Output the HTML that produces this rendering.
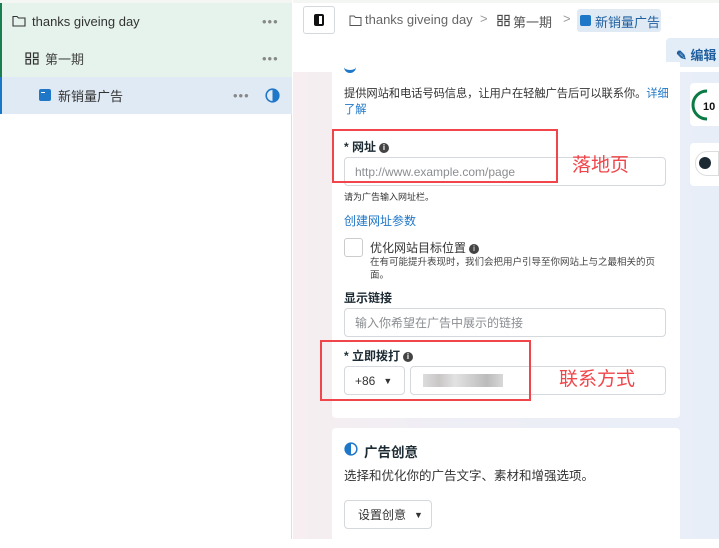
<!DOCTYPE html>
<html><head><meta charset="utf-8"><style>
*{box-sizing:border-box;margin:0;padding:0}
body{width:719px;height:539px;overflow:hidden;position:relative;font-family:"Liberation Sans","Noto Sans CJK SC",sans-serif;background:#fff;color:#1c2b33}
.abs{position:absolute}
.side{left:0;top:0;width:292px;height:539px;background:#fff;border-right:1px solid #dcdfe3}
.row{position:absolute;left:0;width:292px;height:37px;font-size:13px;display:flex;align-items:center}
.dots{position:absolute;color:#888;font-size:13px;letter-spacing:1px}
.main{left:293px;top:0;width:426px;height:539px;background:linear-gradient(90deg,#f6eef0 0%,#eeeef6 40%,#e8eef8 100%)}
.card{background:#fff;border-radius:4px}
.inp{position:absolute;border:1px solid #d5d8dc;border-radius:4px;background:#fff;font-size:12px;color:#8a8d91;display:flex;align-items:center;padding-left:10px}
.red{position:absolute;border:2px solid #f0454a}
.lbl{position:absolute;font-size:12px;font-weight:bold;color:#1c2b33}
.info{display:inline-block;width:10px;height:10px;border-radius:50%;background:#444;color:#fff;font-size:8px;text-align:center;line-height:10px;vertical-align:1px;margin-left:3px}
</style></head><body>
<div class="abs side">
 <div class="abs" style="left:0;top:0;width:292px;height:3px;background:#f4f6f4"></div>
 <div class="row" style="top:3px;background:#e5f3ec;border-left:2px solid #1a7f50">
  <svg class="abs" style="left:10px;top:12px" width="14" height="12" viewBox="0 0 14 12"><path d="M1 1.5h4l1.5 1.5H13v8H1z" fill="none" stroke="#333" stroke-width="1.1"/></svg>
  <span class="abs" style="left:30px;color:#333">thanks giveing day</span><span class="dots" style="left:260px">•••</span></div>
 <div class="row" style="top:40px;background:#e5f3ec;border-left:2px solid #1a7f50">
  <svg class="abs" style="left:23px;top:12px" width="14" height="13" viewBox="0 0 14 13"><g fill="none" stroke="#333" stroke-width="1.2"><rect x="1" y="1" width="4.5" height="4.5"/><rect x="8.5" y="1" width="4.5" height="4.5"/><rect x="1" y="7.5" width="4.5" height="4.5"/><rect x="8.5" y="7.5" width="4.5" height="4.5"/></g></svg>
  <span class="abs" style="left:43px;color:#444">第一期</span><span class="dots" style="left:260px">•••</span></div>
 <div class="row" style="top:77px;background:#dfeaf5;border-left:2px solid #1877c9">
  <div class="abs" style="left:37px;top:12px;width:12px;height:12px;background:#1f77c8;border-radius:2px"><div style="margin:3px 0 0 2px;width:4px;height:1px;background:#fff"></div></div>
  <span class="abs" style="left:56px;color:#333">新销量广告</span><span class="dots" style="left:231px">•••</span>
  <svg class="abs" style="left:263px;top:11px" width="15" height="15" viewBox="0 0 15 15"><circle cx="7.5" cy="7.5" r="6.3" fill="none" stroke="#1f77c8" stroke-width="1.6"/><path d="M7.5 1.2a6.3 6.3 0 0 1 0 12.6z" fill="#1f77c8"/></svg></div>
</div>
<div class="abs main">
 <div class="abs" style="left:0;top:0;width:426px;height:72px;background:#fff"></div>
 <div class="abs" style="left:0;top:0;width:426px;height:3px;background:#f4f6f4"></div>
 <div class="abs" style="left:10px;top:6px;width:32px;height:28px;border:1px solid #d5d8dc;border-radius:3px"><div style="margin:7px 0 0 10px;width:10px;height:12px;border:2px solid #111;border-radius:2px;border-left-width:5px"></div></div>
 <svg class="abs" style="left:56px;top:15px" width="13" height="11" viewBox="0 0 13 11"><path d="M1 1h4l1.5 1.5H12v8H1z" fill="none" stroke="#555" stroke-width="1"/></svg>
 <span class="abs" style="left:72px;top:12px;font-size:13px;color:#666">thanks giveing day</span>
 <span class="abs" style="left:187px;top:11px;font-size:13px;color:#999">&gt;</span>
 <svg class="abs" style="left:204px;top:14px" width="13" height="13" viewBox="0 0 14 13"><g fill="none" stroke="#444" stroke-width="1.2"><rect x="1" y="1" width="4.5" height="4.5"/><rect x="8.5" y="1" width="4.5" height="4.5"/><rect x="1" y="7.5" width="4.5" height="4.5"/><rect x="8.5" y="7.5" width="4.5" height="4.5"/></g></svg>
 <span class="abs" style="left:220px;top:12px;font-size:13px;color:#555">第一期</span>
 <span class="abs" style="left:270px;top:11px;font-size:13px;color:#999">&gt;</span>
 <div class="abs" style="left:284px;top:9px;width:84px;height:23px;background:#dfeaf5;border-radius:3px"></div>
 <div class="abs" style="left:287px;top:15px;width:11px;height:11px;background:#1f77c8;border-radius:2px"></div>
 <span class="abs" style="left:302px;top:12px;font-size:13px;color:#1f5f9f">新销量广告</span>
 <div class="abs" style="left:373px;top:38px;width:60px;height:29px;background:#e3edf7;border-radius:4px"></div>
 <span class="abs" style="left:383px;top:45px;font-size:13px;color:#1f5f9f;font-weight:bold">✎ 编辑</span>
 <div class="abs card" style="left:39px;top:62px;width:348px;height:356px;border-radius:0 0 4px 4px">
  <div class="abs" style="left:12px;top:5px;width:12px;height:6px;border-bottom:3px solid #1f77c8;border-radius:0 0 6px 6px"></div>
  <span class="abs" style="left:12px;top:24px;font-size:11.3px;color:#333;width:330px;line-height:16px;letter-spacing:-0.1px">提供网站和电话号码信息，让用户在轻触广告后可以联系你。<span style="color:#1f77c8">详细了解</span></span>
  <span class="lbl" style="left:12px;top:76px">* 网址<span class="info">i</span></span>
  <div class="inp" style="left:12px;top:95px;width:322px;height:29px">http://www.example.com/page</div>
  <span class="abs" style="left:12px;top:128px;font-size:9px;color:#333">请为广告输入网址栏。</span>
  <span class="abs" style="left:12px;top:150px;font-size:12px;color:#1f77c8">创建网址参数</span>
  <div class="abs" style="left:12px;top:176px;width:19px;height:19px;border:1px solid #ccc;border-radius:3px"></div>
  <span class="abs" style="left:38px;top:177px;font-size:12px;color:#333">优化网站目标位置<span class="info">i</span></span>
  <span class="abs" style="left:38px;top:194px;font-size:9.5px;color:#444;width:300px;line-height:13px">在有可能提升表现时，我们会把用户引导至你网站上与之最相关的页面。</span>
  <span class="lbl" style="left:12px;top:227px">显示链接</span>
  <div class="inp" style="left:12px;top:246px;width:322px;height:29px">输入你希望在广告中展示的链接</div>
  <span class="lbl" style="left:12px;top:285px">* 立即拨打<span class="info">i</span></span>
  <div class="inp" style="left:12px;top:304px;width:61px;height:29px;color:#333">+86 <span style="margin-left:8px;font-size:9px">▼</span></div>
  <div class="inp" style="left:78px;top:304px;width:256px;height:29px"><div style="width:80px;height:13px;margin-left:2px;background:linear-gradient(90deg,#ddd,#c9c6c6,#e2e2e2,#cfcfcf,#bbb,#d8d8d8)"></div></div>
 </div>
 <div class="abs card" style="left:39px;top:428px;width:348px;height:120px">
  <svg class="abs" style="left:12px;top:14px" width="14" height="14" viewBox="0 0 15 15"><circle cx="7.5" cy="7.5" r="6.3" fill="none" stroke="#1f77c8" stroke-width="1.6"/><path d="M7.5 1.2a6.3 6.3 0 0 0 0 12.6z" fill="#1f77c8"/></svg>
  <span class="abs" style="left:32px;top:13px;font-size:13.5px;font-weight:bold">广告创意</span>
  <span class="abs" style="left:12px;top:37px;font-size:12.5px;color:#333">选择和优化你的广告文字、素材和增强选项。</span>
  <div class="inp" style="left:12px;top:72px;width:88px;height:29px;color:#333;padding-left:13px">设置创意 <span style="margin-left:8px;font-size:9px">▼</span></div>
 </div>
 <div class="abs card" style="left:397px;top:83px;width:40px;height:43px"></div>
 <svg class="abs" style="left:398px;top:88px" width="30" height="34" viewBox="0 0 30 34"><path d="M16 3A14 14 0 0 0 16 31" fill="none" stroke="#0b7a45" stroke-width="3"/><text x="12" y="22" font-size="11" font-weight="bold" fill="#111" font-family="Liberation Sans">10</text></svg>
 <div class="abs card" style="left:397px;top:143px;width:40px;height:43px"></div>
 <div class="abs" style="left:402px;top:151px;width:24px;height:25px;border:1px solid #ddd;border-radius:12px 0 0 12px"></div>
 <div class="abs" style="left:406px;top:157px;width:12px;height:12px;border-radius:50%;background:#1c2b33"></div>
</div>
<div class="red" style="left:332px;top:129px;width:226px;height:54px"></div>
<span class="abs" style="left:572px;top:150px;font-size:19px;color:#f0454a">落地页</span>
<div class="red" style="left:320px;top:340px;width:211px;height:61px"></div>
<span class="abs" style="left:559px;top:364px;font-size:19px;color:#f0454a">联系方式</span>
</body></html>
